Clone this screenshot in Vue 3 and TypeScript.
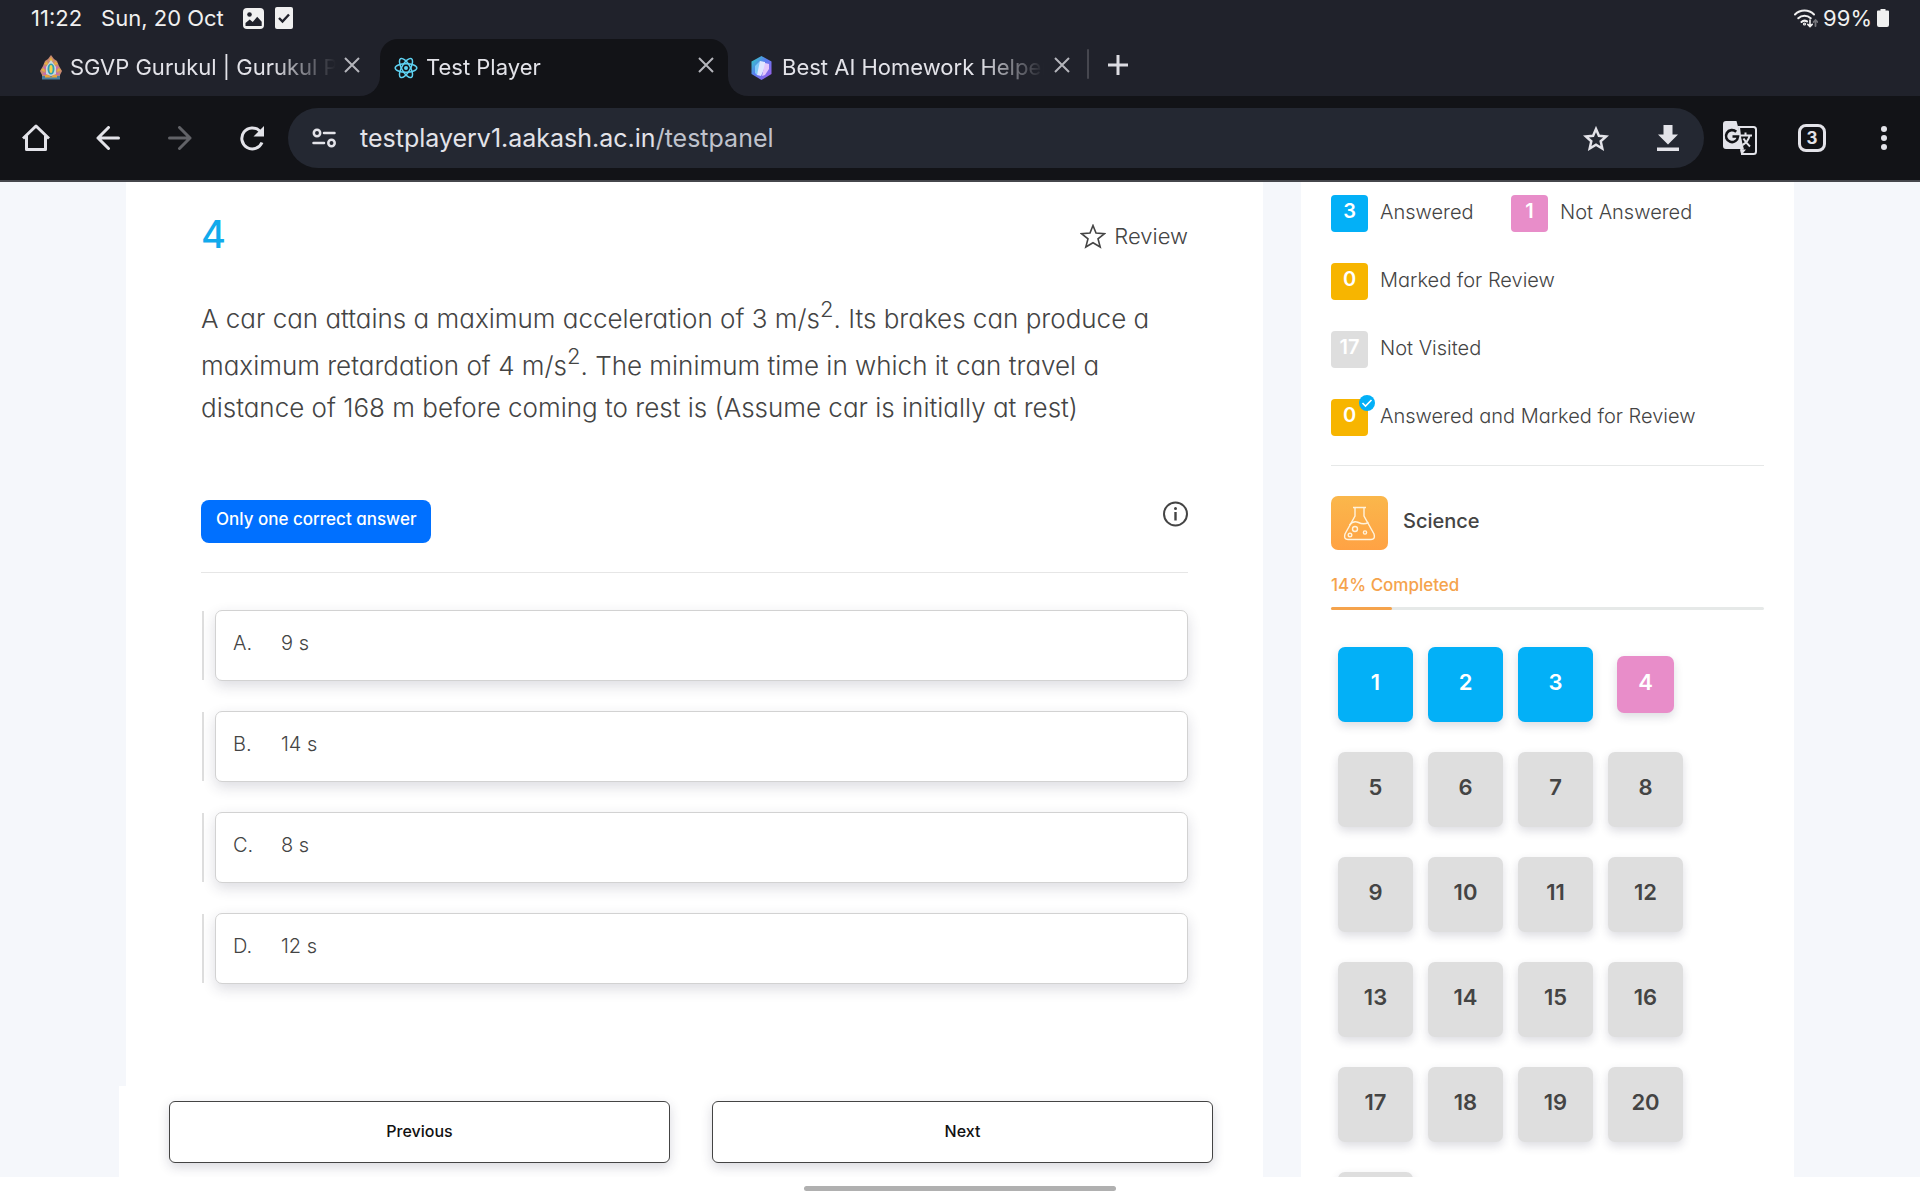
<script setup lang="ts">
import { ref } from 'vue'

type Status = 'answered' | 'missed' | 'marked' | 'unseen'

interface LegendItem {
  count: number
  label: string
  status: Status
  ticked?: boolean
}

const legendRows: LegendItem[][] = [
  [
    { count: 3, label: 'Answered', status: 'answered' },
    { count: 1, label: 'Not Answered', status: 'missed' },
  ],
  [{ count: 0, label: 'Marked for Review', status: 'marked' }],
  [{ count: 17, label: 'Not Visited', status: 'unseen' }],
  [{ count: 0, label: 'Answered and Marked for Review', status: 'marked', ticked: true }],
]

const options = [
  { key: 'A', text: '9 s' },
  { key: 'B', text: '14 s' },
  { key: 'C', text: '8 s' },
  { key: 'D', text: '12 s' },
]

const current = 4
const completed = 14
const picked = ref('')

const questions = Array.from({ length: 21 }, (_, i) => {
  const n = i + 1
  const status: Status = n < current ? 'answered' : n === current ? 'missed' : 'unseen'
  return { n, status }
})
</script>

<template>
  <div class="screen">
    <header class="chrome">
      <div class="status">
        <span>11:22</span>
        <span>Sun, 20 Oct</span>
        <svg class="status-image" width="21" height="21" viewBox="0 0 21 21">
          <rect width="21" height="21" rx="4" fill="#f0f0f0" />
          <circle cx="6.5" cy="6.5" r="2.3" fill="#20222b" />
          <path d="M2.5 18v-3l4.2-3.6 3 2.6 4.5-5.2 4.5 5V18z" fill="#20222b" />
        </svg>
        <svg width="18" height="22" viewBox="0 0 18 22">
          <rect width="18" height="22" rx="2" fill="#f0f0f0" />
          <path d="M4 11l3.5 3.5L14 7.5" fill="none" stroke="#20222b" stroke-width="2.4" />
        </svg>
        <div class="status-right">
          <svg width="24" height="20" viewBox="0 0 24 20" fill="none" stroke="#f0f0f0" stroke-width="2" stroke-linecap="round">
            <path d="M1 6.5a13.5 13.5 0 0 1 19 0M4.3 10.3a9 9 0 0 1 12.4 0M7.5 14a4.5 4.5 0 0 1 5.5-.6" />
            <circle cx="10.5" cy="16" r=".6" />
            <path d="M16 12v6.4M13.8 16.4l2.2 2.2 2.2-2.2" stroke-width="1.6" />
            <path d="M21.5 18v-5.5M19.6 14l1.9-2 1.9 2" stroke="#75767c" stroke-width="1.8" />
          </svg>
          <span>99%</span>
          <svg width="12" height="18" viewBox="0 0 12 18" fill="#f0f0f0">
            <path d="M3.5 0h5v1.5H11a1 1 0 0 1 1 1V16a2 2 0 0 1-2 2H2a2 2 0 0 1-2-2V2.500a1 1 0 0 1 1-1h2.500z" />
          </svg>
        </div>
      </div>

      <div class="tabs">
        <div class="tab tab-first">
          <svg width="22" height="25" viewBox="0 0 22 25">
            <path d="M11 0l3 4 3 2 2 5 3 5-2 4v4H2v-4l-2-4 3-5 2-5 3-2z" fill="#c98a72" />
            <path d="M11 2l2 4h-4zM4 9l3-3 1 4zM18 9l-3-3-1 4zM1 15l3-2 1 4zM21 15l-3-2-1 4z" fill="#e8b13c" />
            <path d="M3 12l3-1v4zM19 12l-3-1v4zM2 19l4-2v3zM20 19l-4-2v3z" fill="#c76bb0" />
            <path d="M11 5l5 7v7l-5 2-5-2v-7z" fill="#c9d8dc" />
            <ellipse cx="11" cy="14" rx="3.500" ry="5.500" fill="#2f9fb5" />
            <ellipse cx="11" cy="14" rx="1.600" ry="4" fill="#f0d54e" />
            <path d="M2 21h18v3.500H2z" fill="#4b7f9f" />
            <path d="M5 20h3l3 2 3-2h3v2.500H5z" fill="#e9a53b" />
          </svg>
          <a class="tab-title" href="#">SGVP Gurukul | Gurukul Parivar</a>
          <button class="close" aria-label="Close tab">
            <svg width="16" height="16" viewBox="0 0 16 16"><path d="M1 1l14 14M15 1L1 15" /></svg>
          </button>
        </div>
        <div class="tab-slot">
          <div class="tab tab-active">
            <svg width="24" height="22" viewBox="0 0 24 22" fill="none" stroke="#5fd3f3" stroke-width="1.500">
              <circle cx="12" cy="11" r="2" fill="#5fd3f3" stroke="none" />
              <ellipse cx="12" cy="11" rx="10.800" ry="4.200" />
              <ellipse cx="12" cy="11" rx="10.800" ry="4.200" transform="rotate(60 12 11)" />
              <ellipse cx="12" cy="11" rx="10.800" ry="4.200" transform="rotate(120 12 11)" />
            </svg>
            <a class="tab-title" href="#">Test Player</a>
            <button class="close" aria-label="Close tab">
              <svg width="16" height="16" viewBox="0 0 16 16"><path d="M1 1l14 14M15 1L1 15" /></svg>
            </button>
          </div>
        </div>
        <div class="tab-rest">
          <div class="tab tab-last">
            <svg width="21" height="24" viewBox="0 0 21 24">
              <defs>
                <linearGradient id="gem" x1="0" y1="0" x2="1" y2="1">
                  <stop offset="0" stop-color="#2fd6c0" />
                  <stop offset=".45" stop-color="#5a7cf0" />
                  <stop offset="1" stop-color="#a45be8" />
                </linearGradient>
              </defs>
              <path d="M10.500 0l10 5.500v12.500L10.500 24 .5 18V5.500z" fill="url(#gem)" />
              <path d="M4 10l5-5v6l-3 8-2-2z" fill="#7fcbf8" />
              <path d="M9 5l5 1v5l-4 9-4-1z" fill="#dfe6ff" />
              <path d="M14 7l4 1v5l-4 6-3 1z" fill="#e3c6fb" />
            </svg>
            <a class="tab-title" href="#">Best AI Homework Helper</a>
            <button class="close" aria-label="Close tab">
              <svg width="16" height="16" viewBox="0 0 16 16"><path d="M1 1l14 14M15 1L1 15" /></svg>
            </button>
          </div>
          <span class="tab-divider"></span>
          <button class="close add" aria-label="New tab">
            <svg width="20" height="20" viewBox="0 0 20 20"><path d="M10 0v20M0 10h20" /></svg>
          </button>
        </div>
      </div>

      <div class="toolbar">
        <button class="tool" aria-label="Home">
          <svg width="28" height="28" viewBox="0 0 28 28" fill="none" stroke="#e3e3e9" stroke-width="3" stroke-linejoin="round">
            <path d="M1 14.500L14 2l13 12.500M4.500 12v13.500h19V12" />
          </svg>
        </button>
        <button class="tool" aria-label="Back">
          <svg width="24" height="24" viewBox="0 0 24 24" fill="none" stroke="#e3e3e9" stroke-width="3" stroke-linecap="round" stroke-linejoin="round">
            <path d="M22.500 12H2M12.500 1.500L2 12l10.500 10.500" />
          </svg>
        </button>
        <button class="tool" aria-label="Forward">
          <svg width="24" height="24" viewBox="0 0 24 24" fill="none" stroke="#616267" stroke-width="3" stroke-linecap="round" stroke-linejoin="round">
            <path d="M1.500 12H22M11.500 1.500L22 12 11.500 22.500" />
          </svg>
        </button>
        <button class="tool" aria-label="Reload">
          <svg width="26" height="26" viewBox="0 0 26 26">
            <path d="M23 17.500A10.500 10.500 0 1 1 20.800 6" fill="none" stroke="#e3e3e9" stroke-width="3" />
            <path d="M25 1v10.500H14.500z" fill="#e3e3e9" />
          </svg>
        </button>
        <div class="address">
          <button class="tool" aria-label="Site settings">
            <svg width="24" height="20" viewBox="0 0 24 20" fill="none" stroke="#e3e3e9" stroke-width="2.500">
              <circle cx="5" cy="5" r="3.200" />
              <circle cx="19.500" cy="15" r="3.200" />
              <path d="M12 5h10.500M1.500 15h10.500" stroke-linecap="round" />
            </svg>
          </button>
          <div class="url" role="textbox" aria-label="Address">testplayerv1.aakash.ac.in<span>/testpanel</span></div>
          <button class="tool" aria-label="Bookmark">
            <svg width="26" height="25" viewBox="0 0 26 25" fill="none" stroke="#e3e3e9" stroke-width="2.500">
              <path d="M13 3l2.900 6.800 7.300.6-5.500 4.900 1.600 7.200L13 18.700l-6.300 3.800 1.600-7.200-5.500-4.900 7.300-.6z" />
            </svg>
          </button>
          <button class="tool" aria-label="Download">
            <svg width="22" height="26" viewBox="0 0 22 26" fill="#e3e3e9">
              <path d="M6.500 0h9v9.500H21L11 19.500 1 9.500h5.500zM0 22.500h22V26H0z" />
            </svg>
          </button>
        </div>
        <button class="tool" aria-label="Translate">
          <svg width="34" height="34" viewBox="0 0 34 34">
            <path d="M16 6h14.500a2.500 2.500 0 0 1 2.500 2.500v22a2.500 2.500 0 0 1-2.500 2.500H19z" fill="none" stroke="#e3e3e9" stroke-width="2" />
            <path d="M3 0h10.500l7.500 28.500h-1l-2-.5H3a3 3 0 0 1-3-3V3a3 3 0 0 1 3-3z" fill="#e3e3e9" />
            <path d="M17 28.500h6L18.500 34z" fill="#e3e3e9" />
            <path d="M17.500 14.500H29M22.500 11.500v3M26.500 15q-1.500 6-7 9M20.500 17.500q2.500 4.500 6.500 8" fill="none" stroke="#e3e3e9" stroke-width="2" />
            <path d="M13.200 10.800A6 6 0 1 0 15 15.500H9.500" fill="none" stroke="#121317" stroke-width="2.600" />
          </svg>
        </button>
        <button class="tool" aria-label="Open tabs"><span class="tab-count">3</span></button>
        <button class="tool" aria-label="Menu">
          <svg width="6" height="24" viewBox="0 0 6 24" fill="#e3e3e9">
            <circle cx="3" cy="3" r="3" /><circle cx="3" cy="12" r="3" /><circle cx="3" cy="21" r="3" />
          </svg>
        </button>
      </div>
    </header>

    <main class="page">
      <div class="left">
        <section class="card">
          <div class="card-head">
            <h1>{{ current }}</h1>
            <button class="review">
              <svg width="26" height="25" viewBox="0 0 26 25" fill="none" stroke="#444" stroke-width="1.600">
                <path d="M13 1.500l3 7.600 8.500.5-6.500 5.200 2.200 8.200L13 18.800 5.800 23 8 14.800 1.500 9.600l8.500-.5z" />
              </svg>
              Review
            </button>
          </div>
          <p class="question">
            A car can attains a maximum acceleration of 3 m/s<sup>2</sup>. Its brakes can produce a maximum
            retardation of 4 m/s<sup>2</sup>. The minimum time in which it can travel a distance of 168 m before
            coming to rest is (Assume car is initially at rest)
          </p>
          <div class="kind">
            <span class="badge">Only one correct answer</span>
            <button class="info" aria-label="Information">
              <svg width="26" height="28" viewBox="0 0 26 28" fill="none" stroke="#444" stroke-width="2">
                <circle cx="13.500" cy="14" r="11.500" />
                <path d="M13.500 12v8.500" stroke-width="2.400" />
                <circle cx="13.500" cy="8.500" r="1.500" fill="#444" stroke="none" />
              </svg>
            </button>
          </div>
          <div class="options">
            <label v-for="o in options" :key="o.key" class="option">
              <input v-model="picked" type="radio" name="answer" :value="o.key" />
              <span class="option-box">
                <span class="option-key">{{ o.key }}.</span>
                <span>{{ o.text }}</span>
              </span>
            </label>
          </div>
        </section>
        <nav class="pager">
          <button>Previous</button>
          <button>Next</button>
        </nav>
      </div>

      <aside class="side">
        <div class="legend">
          <div v-for="(row, i) in legendRows" :key="i" class="legend-row">
            <div v-for="item in row" :key="item.label" class="legend-item">
              <span class="chip" :class="item.status">
                {{ item.count }}
                <svg v-if="item.ticked" class="tick" width="16" height="16" viewBox="0 0 16 16">
                  <circle cx="8" cy="8" r="8" fill="#03b0f7" />
                  <path d="M3.500 8l3 3 6-6" fill="none" stroke="#fff" stroke-width="1.600" />
                </svg>
              </span>
              {{ item.label }}
            </div>
          </div>
        </div>
        <div class="subject">
          <svg width="57" height="54" viewBox="0 0 57 54">
            <defs>
              <linearGradient id="amber" x1="0" y1="0" x2="0" y2="1">
                <stop offset="0" stop-color="#fab74b" />
                <stop offset="1" stop-color="#ffa244" />
              </linearGradient>
            </defs>
            <rect width="57" height="54" rx="7" fill="url(#amber)" />
            <g fill="none" stroke="#fff3dc" stroke-width="1.400">
              <path d="M22 11.500h13M24 11.500v8.500L14 38q-1.500 5.500 3 5.500h23q4.500 0 3-5.500L33 20v-8.500" />
              <path d="M18.500 29q4-5 9-2.500t10 0" />
              <circle cx="24" cy="33" r="2.500" />
              <circle cx="34" cy="36.500" r="1.600" />
              <circle cx="19" cy="39" r="1.800" />
            </g>
          </svg>
          <h2>Science</h2>
        </div>
        <div class="progress-label">{{ completed }}% Completed</div>
        <div class="progress"><span :style="{ width: completed + '%' }"></span></div>
        <div class="palette">
          <button
            v-for="q in questions"
            :key="q.n"
            :class="[q.status, { current: q.n === current }]"
          >
            {{ q.n }}
          </button>
        </div>
      </aside>
    </main>
    <footer class="gesture"><span></span></footer>
  </div>
</template>

<style>
body {
  margin: 0;
}
</style>

<style scoped>
.screen {
  height: 100vh;
  display: flex;
  flex-direction: column;
  background: #fff;
  color: #444;
  font-family: Inter, 'Liberation Sans', sans-serif;
  overflow: hidden;
}
* {
  box-sizing: border-box;
}
button {
  margin: 0;
  padding: 0;
  border: 0;
  background: none;
  color: inherit;
  font: inherit;
  font-feature-settings: inherit;
  cursor: pointer;
}
svg {
  display: block;
  flex: none;
}

/* Browser chrome */
.chrome {
  flex: none;
  background: #121317;
  color: #e3e3e9;
  border-bottom: 2px solid #46474c;
  font-size: 22px;
}
.status {
  height: 39px;
  padding: 0 31px 3px;
  display: flex;
  align-items: center;
  background: #20222b;
  color: #f0f0f0;
  gap: 19px;
}
.status-image {
  margin-right: -8px;
}
.status-right {
  margin-left: auto;
  display: flex;
  align-items: center;
  gap: 5px;
}
.tabs {
  height: 57px;
  display: flex;
}
.tab {
  height: 100%;
  display: flex;
  align-items: center;
  gap: 8px;
}
.tab-title {
  flex: 1;
  min-width: 0;
  padding-bottom: 2px;
  color: inherit;
  text-decoration: none;
  white-space: nowrap;
  overflow: hidden;
  mask-image: linear-gradient(to right, #000 calc(100% - 64px), transparent);
}
.close {
  height: 52px;
  align-self: flex-start;
}
.close svg {
  fill: none;
  stroke: #b4b5bb;
  stroke-width: 2;
}
.tab-first {
  width: 380px;
  padding: 0 20px 0 40px;
  background: #20222b;
  border-bottom-right-radius: 20px;
}
.tab-slot {
  width: 348px;
  background: #20222b;
}
.tab-active {
  padding: 0 14px;
  background: #121317;
  border-radius: 18px 18px 0 0;
}
.tab-rest {
  flex: 1;
  display: flex;
  align-items: flex-start;
  background: #20222b;
  border-bottom-left-radius: 20px;
}
.tab-last {
  width: 359px;
  padding: 0 17px 0 23px;
  gap: 10px;
}
.tab-divider {
  width: 2px;
  height: 30px;
  margin-top: 10px;
  background: #46474f;
  border-radius: 1px;
}
.add {
  margin-left: 19px;
}
.add svg {
  stroke: #dcdce2;
  stroke-width: 3;
}
.toolbar {
  height: 84px;
  display: flex;
  align-items: center;
}
.tool {
  width: 72px;
  height: 60px;
  flex: none;
  display: flex;
  align-items: center;
  justify-content: center;
}
.address {
  flex: 1;
  height: 60px;
  display: flex;
  align-items: center;
  background: #242832;
  border-radius: 30px;
}
.url {
  flex: 1;
  font-size: 25px;
}
.url span {
  color: #bfc2cc;
}
.tab-count {
  width: 28px;
  height: 28px;
  display: flex;
  align-items: center;
  justify-content: center;
  border: 3px solid #e3e3e9;
  border-radius: 8px;
  font-size: 17px;
  font-weight: 700;
}

/* Test page */
.page {
  flex: 1;
  min-height: 0;
  display: flex;
  gap: 38px;
  padding: 0 126px;
  background: #f5f7fb;
  overflow: hidden;
  font-feature-settings: 'cv11';
}
.left {
  flex: 1;
  min-width: 0;
  display: flex;
  flex-direction: column;
}
.card {
  flex: 1;
  min-height: 0;
  padding: 31px 75px 0;
  background: #fff;
}
.card-head {
  height: 46px;
  display: flex;
  align-items: center;
  justify-content: space-between;
}
h1 {
  margin: 0;
  padding-bottom: 5px;
  color: #12aaec;
  font-size: 38px;
  font-weight: 500;
}
.review {
  display: flex;
  align-items: center;
  gap: 8px;
  font-size: 22px;
  font-weight: 300;
}
.question {
  margin: 34px 0 0;
  font-size: 26px;
  font-weight: 300;
  line-height: 42px;
}
sup {
  font-size: 22px;
  line-height: 33px;
  vertical-align: 11px;
}
.kind {
  margin-top: 71px;
  padding-bottom: 29px;
  display: flex;
  align-items: flex-start;
  justify-content: space-between;
  border-bottom: 1px solid #e6e6e6;
}
.badge {
  height: 43px;
  padding: 0 15px 5px;
  display: flex;
  align-items: center;
  border-radius: 8px;
  background: #0070ff;
  color: #fff;
  font-size: 17px;
  font-weight: 500;
}
.options {
  margin-top: 37px;
  display: flex;
  flex-direction: column;
  gap: 30px;
}
.option {
  display: flex;
  gap: 11px;
  height: 71px;
  padding-left: 1px;
  cursor: pointer;
}
.option::before {
  content: '';
  width: 2px;
  margin: 1px 0;
  background: #dedede;
}
.option input {
  position: absolute;
  opacity: 0;
  pointer-events: none;
}
.option-box {
  flex: 1;
  display: flex;
  align-items: center;
  padding: 0 17px 5px;
  background: #fff;
  border: 1px solid #d2d2d2;
  border-radius: 7px;
  box-shadow: 0 5px 14px rgba(40, 40, 70, 0.16);
  font-size: 20px;
  font-weight: 300;
}
.option-key {
  width: 48px;
}
.pager {
  flex: none;
  height: 91px;
  margin-left: -7px;
  padding: 15px 50px 14px;
  display: flex;
  gap: 42px;
  background: #fff;
}
.pager button {
  flex: 1;
  padding-bottom: 3px;
  background: #fff;
  border: 1px solid #444;
  border-radius: 6px;
  box-shadow: 0 4px 12px rgba(40, 40, 70, 0.18);
  color: #111;
  font-size: 16px;
  font-weight: 500;
}

/* Side panel */
.side {
  width: 493px;
  flex: none;
  padding: 13px 30px 0;
  background: #fff;
}
.legend {
  display: flex;
  flex-direction: column;
  gap: 31px;
  padding-bottom: 29px;
  border-bottom: 1px solid #e6e8e8;
  font-size: 20px;
  font-weight: 300;
}
.legend-row {
  display: flex;
}
.legend-item {
  min-width: 180px;
  height: 37px;
  padding-bottom: 3px;
  display: flex;
  align-items: center;
  gap: 12px;
}
.chip {
  position: relative;
  width: 37px;
  height: 37px;
  margin-bottom: -3px;
  padding-bottom: 5px;
  display: flex;
  align-items: center;
  justify-content: center;
  border-radius: 4px;
  font-weight: 600;
}
.chip,
.answered,
.missed,
.marked {
  color: #fff;
}
.answered {
  background: #03b0f7;
}
.missed {
  background: #e88dc9;
}
.marked {
  background: #f7b500;
}
.unseen {
  background: #dedede;
}
.tick {
  position: absolute;
  top: -4px;
  right: -7px;
}
.subject {
  margin-top: 30px;
  display: flex;
  align-items: center;
  gap: 15px;
}
h2 {
  margin: 0;
  padding-bottom: 5px;
  font-size: 20px;
  font-weight: 500;
}
.progress-label {
  margin-top: 25px;
  line-height: 20px;
  color: #f5a34c;
  font-size: 17px;
  font-weight: 500;
}
.progress {
  height: 3px;
  margin-top: 12px;
  display: flex;
  background: #e6e9e8;
  border-radius: 2px;
}
.progress span {
  background: #f5a34c;
  border-radius: 2px;
}
.palette {
  margin-top: 37px;
  padding-left: 7px;
  display: grid;
  grid-template-columns: repeat(4, 75px);
  grid-auto-rows: 75px;
  gap: 30px 15px;
  font-size: 22px;
  font-weight: 600;
}
.palette button {
  padding-bottom: 5px;
  border-radius: 7px;
  box-shadow: 0 4px 10px rgba(40, 40, 70, 0.16);
}
.palette .current {
  margin: 9px;
}

.gesture {
  height: 23px;
  flex: none;
  display: flex;
  align-items: center;
  justify-content: center;
}
.gesture span {
  width: 312px;
  height: 5px;
  border-radius: 3px;
  background: #b0b0b0;
}
</style>
